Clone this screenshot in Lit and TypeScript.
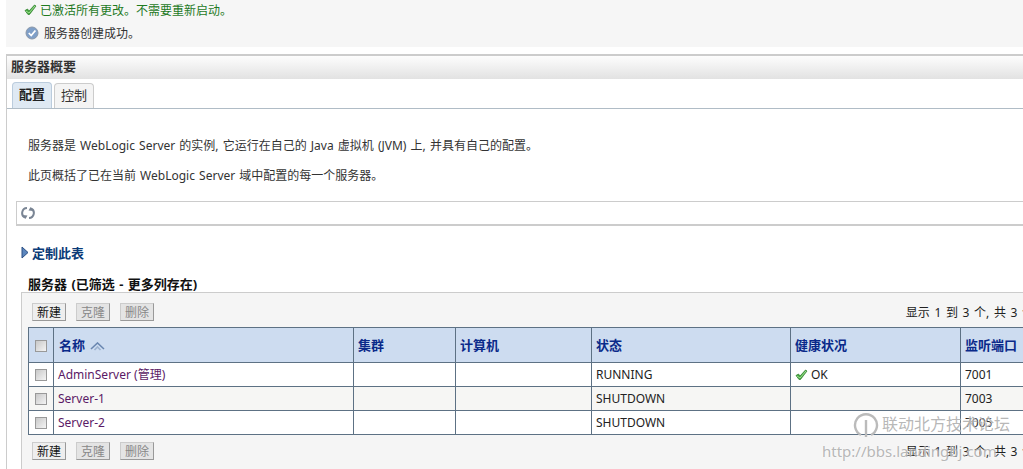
import { LitElement, html, css, svg } from "lit";
import { customElement } from "lit/decorators.js";

const check = svg`<path d="M1 6.5 L3.5 5 L5 7 L10.5 1 L12 2 L5.5 10.5 L4 10.5 Z" fill="#3fa83a" stroke="#2c7d2a" stroke-width=".7"/><path d="M2 7 L5 9 L11 2" fill="none" stroke="#bfe8b0" stroke-width=".8"/>`;

@customElement("app-root")
export class AppRoot extends LitElement {
  static styles = css`
    :host { display: block; width: 1023px; height: 469px; overflow: hidden; position: relative; background: #fff;
      font-family: "Noto Sans", "Noto Sans CJK SC", sans-serif; font-size: 12px; color: #222; }
    .msgs { margin-left: 6px; height: 47px; background: #f6f6f6; padding-left: 18px; box-sizing: border-box; }
    .msg { display: flex; align-items: center; gap: 4px; height: 16px; }
    .msg.ok { color: #1f7a1f; padding-top: 2px; }
    .msg.info { margin-top: 5px; padding-left: 1px; gap: 5px; color: #333; }
    .panel { margin: 7px 0 0 6px; border-top: 2px solid #ccc; border-left: 1px solid #ccc; height: 415px; box-sizing: border-box; }
    .title { height: 23px; display: flex; align-items: center; padding: 0 0 4px 4px; box-sizing: border-box; font-weight: 700; color: #333; font-size: 13px;
      background: linear-gradient(#fdfdfd, #e2e2e2); }
    .tabs { display: flex; gap: 2px; margin-top: 3px; padding-left: 5px; height: 27px; border-bottom: 1px solid #b0bcc6; box-sizing: border-box; align-items: flex-end; }
    .tab { height: 25px; width: 40px; display: flex; align-items: center; justify-content: center; padding-bottom: 4px; border: 1px solid #ccc; border-bottom: 0; border-radius: 4px 4px 0 0; background: #f4f4f4; box-sizing: border-box; color: #333; font-size: 13px; }
    .tab.on { height: 26px; background: #dfe9f3; font-weight: 700; border-color: #bcd; color: #222; }
    .desc { margin: 0; padding-left: 21px; height: 16px; line-height: 16px; color: #333; word-spacing: 1px; }
    .d1 { margin-top: 29px; }
    .d2 { margin-top: 14px; }
    .bar { margin: 17px 0 0 9px; height: 25px; border: 1px solid #ccc; border-right: 0; border-bottom-width: 2px; box-sizing: border-box; display: flex; align-items: center; padding-left: 4px; }
    .cust { margin: 18px 0 0 14px; display: flex; align-items: center; gap: 3px; font-weight: 700; color: #0b3b78; height: 16px; font-size: 13px; }
    .head { margin: 17px 0 0 21px; font-weight: 700; color: #111; height: 15px; line-height: 14px; font-size: 13px; word-spacing: 1px; }
    .tp { margin: 0 0 0 14px; height: 177px; background: #f5f5f5; border-top: 1px solid #ccc; border-left: 1px solid #ccc; padding: 10px 0 0 6px; box-sizing: border-box; }
    .tools { display: flex; justify-content: space-between; align-items: center; height: 18px; white-space: nowrap; }
    .tools.b { margin-top: 7px; }
    .btns { display: flex; gap: 10px; margin-left: 4px; }
    .btn { width: 34px; height: 18px; display: flex; align-items: center; justify-content: center; background: #eee; border: 1px solid #ccc; border-right-color: #999; border-bottom-color: #999; box-sizing: border-box; color: #111; }
    .btn.off { color: #888; background: #e4e4e4; }
    .count { color: #222; flex: none; word-spacing: 1.5px; margin-right: -11px; }
    table { margin-top: 6px; border-collapse: collapse; table-layout: fixed; width: 1000px; background: #fff; }
    th, td { border: 1px solid #5d7184; padding: 0 0 0 4px; box-sizing: border-box; overflow: hidden; white-space: nowrap; font-weight: 400; text-align: left; line-height: 14px; }
    th { height: 35px; background: #cddcf0; color: #0a2a8a; font-weight: 700; font-size: 13px; }
    th.nm { padding-left: 5px; }
    td { height: 24px; color: #222; }
    tr.alt td { background: #f6f6f4; }
    td.cb, th.cb { padding: 0; text-align: center; }
    .box { display: inline-block; width: 12px; height: 12px; border: 1px solid #999; background: linear-gradient(135deg, #c8c8c8, #f4f4f4); box-sizing: border-box; vertical-align: middle; }
    a { color: #5b1a66; text-decoration: none; }
    .ok { display: inline-flex; align-items: center; gap: 3px; padding-top: 2px; }
    .sort { vertical-align: middle; margin-left: 2px; }
    .wm { position: absolute; left: 820px; top: 414px; color: rgba(165,165,165,.8); font-size: 16px; line-height: 20px; text-shadow: 0 0 2px #fff; white-space: nowrap; pointer-events: none; }
    .wm1 { padding-left: 62px; }
    .wm2 { margin-top: 7px; padding-left: 2px; font-size: 15px; }
    .logo { position: absolute; left: 33px; top: -2px; }
  `;

  private rows() {
    const data = [
      ["AdminServer (管理)", "RUNNING", true, "7001"],
      ["Server-1", "SHUTDOWN", false, "7003"],
      ["Server-2", "SHUTDOWN", false, "7005"],
    ] as const;
    return data.map((r, i) => html`<tr class=${i === 1 ? "alt" : ""}>
      <td class="cb"><span class="box"></span></td>
      <td><a href="#">${r[0]}</a></td><td></td><td></td><td>${r[1]}</td>
      <td>${r[2] ? html`<span class="ok"><svg width="13" height="12" viewBox="0 0 13 12">${check}</svg>OK</span>` : ""}</td>
      <td>${r[3]}</td></tr>`);
  }

  private tools(cls: string) {
    return html`<div class="tools ${cls}">
      <div class="btns"><div class="btn">新建</div><div class="btn off">克隆</div><div class="btn off">删除</div></div>
      <div class="count">显示 1 到 3 个, 共 3 个</div>
    </div>`;
  }

  render() {
    return html`
      <div class="msgs">
        <div class="msg ok"><svg width="13" height="12" viewBox="0 0 13 12">${check}</svg>已激活所有更改。不需要重新启动。</div>
        <div class="msg info"><svg width="14" height="14" viewBox="0 0 14 14"><circle cx="7" cy="7" r="6" fill="#7f9fc8" stroke="#8a97a8"/><path d="M3.8 7 L6.2 9.5 L10.4 4.5" fill="none" stroke="#fff" stroke-width="1.8"/></svg>服务器创建成功。</div>
      </div>
      <div class="panel">
        <div class="title">服务器概要</div>
        <div class="tabs"><div class="tab on">配置</div><div class="tab">控制</div></div>
        <p class="desc d1">服务器是 WebLogic Server 的实例, 它运行在自己的 Java 虚拟机 (JVM) 上, 并具有自己的配置。</p>
        <p class="desc d2">此页概括了已在当前 WebLogic Server 域中配置的每一个服务器。</p>
        <div class="bar"><svg width="14" height="14" viewBox="0 0 14 14" fill="none" stroke="#7a8594" stroke-width="2"><path d="M6 2 A5 5 0 0 0 4 11.5"/><path d="M8 12 A5 5 0 0 0 10 2.5"/><path d="M1.5 9 L4.5 13 L6.5 9.5 Z" fill="#7a8594" stroke="none"/><path d="M7.5 4.5 L9.5 1 L12.5 5 Z" fill="#7a8594" stroke="none"/></svg></div>
        <div class="cust"><svg width="8" height="13" viewBox="0 0 8 13"><path d="M1 1 L7 6.5 L1 12 Z" fill="#5c86bd" stroke="#2b4f85"/></svg>定制此表</div>
        <div class="head">服务器 (已筛选 - 更多列存在)</div>
        <div class="tp">
          ${this.tools("")}
          <table>
            <colgroup><col style="width:25px"/><col style="width:300px"/><col style="width:102px"/><col style="width:136px"/><col style="width:199px"/><col style="width:170px"/><col style="width:68px"/></colgroup>
            <tr><th class="cb"><span class="box"></span></th>
              <th class="nm">名称 <svg class="sort" width="15" height="9" viewBox="0 0 15 9" fill="none" stroke="#6a87b0" stroke-width="1.6"><path d="M1 7 L7.5 1 L14 7"/><path d="M4.5 8 L7.5 5 L10.5 8" stroke="#9db3d0"/></svg></th>
              <th>集群</th><th>计算机</th><th>状态</th><th>健康状况</th><th>监听端口</th></tr>
            ${this.rows()}
          </table>
          ${this.tools("b")}
        </div>
      </div>
      <div class="wm">
        <svg class="logo" width="26" height="26" viewBox="0 0 26 26" fill="none" stroke="#bbb" stroke-width="2.4"><path d="M8 23 A11 11 0 1 1 18 23"/><path d="M13 8 V25"/></svg>
        <div class="wm1">联动北方技术论坛</div>
        <div class="wm2">http://bbs.landingbj.com</div>
      </div>
    `;
  }
}
